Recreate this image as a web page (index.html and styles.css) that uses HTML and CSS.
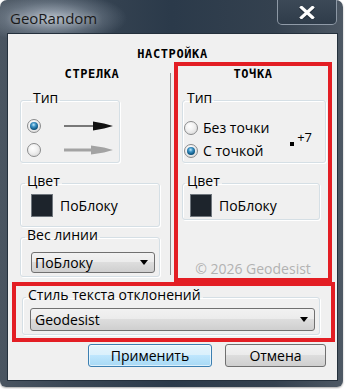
FILE: index.html
```html
<!DOCTYPE html>
<html lang="ru">
<head>
<meta charset="utf-8">
<title>GeoRandom</title>
<link rel="stylesheet" href="styles.css">
</head>
<body>
<div class="window">
  <div class="titlebar">
    <span class="title">GeoRandom</span>
    <div class="close">
      <svg width="16" height="13" viewBox="0 0 16 13">
        <path d="M2.5 1.5 L13.5 11.5 M13.5 1.5 L2.5 11.5" stroke="#1b2530" stroke-width="4" stroke-linecap="square" transform="translate(0 1)" opacity="0.6"/>
        <path d="M2.5 1.5 L13.5 11.5 M13.5 1.5 L2.5 11.5" stroke="#ffffff" stroke-width="3.2" stroke-linecap="square"/>
      </svg>
    </div>
  </div>
  <div class="client">
    <div class="heading">НАСТРОЙКА</div>
    <div class="columns">
      <div class="col col-left">
        <div class="subhead">СТРЕЛКА</div>
        <fieldset class="group g-ltype">
          <legend>Тип</legend>
          <div class="arrow-row">
            <span class="radio checked"></span>
            <svg class="arrow" width="50" height="12" viewBox="0 0 50 12">
              <rect x="0" y="5.5" width="31" height="1" fill="#000"/>
              <polygon points="29,1.5 40,3.5 49,6 40,8.5 29,10.5" fill="#111"/>
            </svg>
          </div>
          <div class="arrow-row">
            <span class="radio"></span>
            <svg class="arrow" width="50" height="12" viewBox="0 0 50 12">
              <rect x="0" y="4.5" width="30" height="3" fill="#a3a3a3"/>
              <polygon points="27,1.5 40,3.5 49,6 40,8.5 27,10.5" fill="#a3a3a3"/>
            </svg>
          </div>
        </fieldset>
        <fieldset class="group g-lcolor">
          <legend>Цвет</legend>
          <div class="color-row">
            <span class="swatch"></span>
            <span>ПоБлоку</span>
          </div>
        </fieldset>
        <fieldset class="group g-weight">
          <legend>Вес линии</legend>
          <div class="gbody-weight">
            <div class="combo combo-small"><span>ПоБлоку</span><span class="caret"></span></div>
          </div>
        </fieldset>
      </div>
      <div class="col col-right">
        <div class="subhead">ТОЧКА</div>
        <fieldset class="group g-rtype">
          <legend>Тип</legend>
          <div class="rtype-body">
            <div class="radios">
              <div class="radio-row"><span class="radio"></span><span class="rlabel">Без точки</span></div>
              <div class="radio-row"><span class="radio checked"></span><span class="rlabel">С точкой</span></div>
            </div>
            <div class="marker"><span class="dot"></span><span class="plus">+7</span></div>
          </div>
        </fieldset>
        <fieldset class="group g-rcolor">
          <legend>Цвет</legend>
          <div class="color-row">
            <span class="swatch"></span>
            <span>ПоБлоку</span>
          </div>
        </fieldset>
        <div class="copyright">© 2026 Geodesist</div>
      </div>
    </div>
    <div class="style-box">
      <fieldset class="group g-style">
        <legend>Стиль текста отклонений</legend>
        <div class="gbody-style">
          <div class="combo combo-wide"><span>Geodesist</span><span class="caret"></span></div>
        </div>
      </fieldset>
    </div>
    <div class="buttons">
      <div class="btn btn-default">Применить</div>
      <div class="btn">Отмена</div>
    </div>
  </div>
</div>
</body>
</html>
```
FILE: styles.css
```css
* { box-sizing: border-box; }
html, body { margin: 0; padding: 0; }
body {
  width: 345px;
  height: 389px;
  overflow: hidden;
  background: #ffffff;
  font-family: "Open Sans", "Noto Sans", sans-serif;
  font-size: 14px;
  color: #000;
}
.window {
  width: 343px;
  height: 387px;
  border-radius: 7px 7px 6px 6px;
  padding: 0 5px 6px 7px;
  display: flex;
  flex-direction: column;
  background:
    radial-gradient(ellipse 75px 26px at 52px 18px, rgba(190, 200, 212, 0.85), rgba(160, 172, 186, 0.35) 60%, rgba(120, 135, 150, 0) 100%),
    linear-gradient(90deg, #4a5561 0%, #3a4755 20%, #2b3a4a 50%, #34414f 80%, #4d5864 100%);
  box-shadow: 0 1px 2px rgba(0, 0, 0, 0.35);
}
.titlebar {
  height: 33px;
  display: flex;
  align-items: flex-start;
}
.title {
  font-size: 15px;
  line-height: 20px;
  padding: 8px 0 0 3px;
  color: #1a1a1a;
  text-shadow: 0 0 6px rgba(255, 255, 255, 0.5);
}
.close {
  margin-left: auto;
  margin-right: 1px;
  width: 60px;
  height: 25px;
  border: 1px solid rgba(200, 210, 222, 0.6);
  border-top: none;
  border-radius: 0 0 5px 5px;
  background: linear-gradient(#3c4957, #2f3c4a);
  display: flex;
  align-items: center;
  justify-content: center;
}
.client {
  flex: 1;
  background: #f0f0f0;
  border: 1px solid #24303c;
  display: flex;
  flex-direction: column;
}
.heading {
  height: 28px;
  padding-top: 12px;
  line-height: 16px;
  text-align: center;
  font-family: "DejaVu Sans Mono", monospace;
  font-weight: bold;
  font-size: 12px;
  letter-spacing: 0.6px;
}
.columns {
  display: grid;
  grid-template-columns: 160px 158px;
  column-gap: 2px;
  margin: 0 5px 0 4px;
  height: 220px;
}
.col { display: flex; flex-direction: column; }
.col-left {
  padding-top: 4px;
  background: linear-gradient(#8c8c8c, #8c8c8c) no-repeat right 1px top 11px / 1px 202px;
}
.col-right {
  border: 4px solid #e31e24;
}
.subhead {
  line-height: 16px;
  height: 16px;
  text-align: center;
  font-family: "DejaVu Sans Mono", monospace;
  font-weight: bold;
  font-size: 12px;
  letter-spacing: 0.6px;
}
.group {
  margin: 0;
  padding: 0;
  min-width: 0;
  border: 1px solid #d5dfe5;
  border-radius: 3px;
  box-shadow: inset 1px 1px 0 #fff, 1px 1px 0 #fff;
}
.group legend {
  padding: 0 2px 4px;
  margin-left: 4px;
  line-height: 16px;
}
.g-ltype { margin: 8px 0 0 8px; width: 100px; padding: 4px 0 0 6px; }
.arrow-row { height: 24px; display: flex; align-items: center; }
.arrow { margin-left: 23px; display: block; }
.radio {
  width: 14px;
  height: 14px;
  border-radius: 50%;
  border: 1px solid #8a8b8c;
  background: radial-gradient(circle at 40% 35%, #ffffff 0%, #f2f2f2 40%, #d2d2d2 100%);
  display: flex;
  align-items: center;
  justify-content: center;
  flex: none;
}
.radio.checked::after {
  content: "";
  width: 8px;
  height: 8px;
  border-radius: 50%;
  background: radial-gradient(circle at 45% 35%, #c4ebfb 0%, #3f94c6 30%, #105a86 65%, #0a3552 100%);
}
.g-lcolor { margin: 10px 0 0 8px; width: 140px; }
.color-row { display: flex; align-items: center; gap: 7px; padding: 1px 0 0 10px; line-height: 16px; }
.g-lcolor .color-row { padding-bottom: 9px; }
.swatch {
  width: 22px;
  height: 23px;
  background: #1d242c;
  border: 1px solid #6f767d;
  flex: none;
}
.g-weight { margin: 0 0 0 8px; width: 140px; }
.gbody-weight { padding: 5px 0 3px 10px; }
.combo {
  height: 21px;
  border: 1px solid #707070;
  border-radius: 3px;
  background: linear-gradient(#f2f2f2 0%, #ebebeb 50%, #dddddd 50%, #cfcfcf 100%);
  display: flex;
  align-items: center;
  justify-content: space-between;
  padding: 0 6px 0 3px;
  line-height: 16px;
}
.combo-small { width: 124px; }
.caret {
  width: 0;
  height: 0;
  border-left: 4.5px solid transparent;
  border-right: 4.5px solid transparent;
  border-top: 5px solid #000;
}
.g-rtype { margin: 8px 2px 0 4px; }
.g-rtype legend { margin-left: 2px; }
.rtype-body { display: flex; padding: 6px 0 0 1px; }
.radio-row { height: 23px; display: flex; align-items: center; }
.rlabel { margin-left: 5px; line-height: 16px; }
.marker { margin: 14px 13px 0 auto; display: flex; align-items: flex-start; }
.dot { width: 4px; height: 4px; background: #000; margin-top: 12px; }
.plus { font-size: 13px; line-height: 14px; margin-left: 3px; }
.g-rcolor { margin: 10px 8px 0 4px; }
.g-rcolor legend { margin-left: 2px; }
.g-rcolor .color-row { padding: 1px 0 2px 7px; }
.copyright {
  margin-top: auto;
  padding-bottom: 1px;
  line-height: 16px;
  text-align: center;
  color: #b2b2b2;
}
.style-box {
  margin: 0 2px 0 4px;
  height: 60px;
  border: 4px solid #e31e24;
}
.g-style { margin: 1px 11px 0 6px; }
.g-style legend { margin-left: 3px; }
.gbody-style { padding: 1px 0 3px 7px; }
.combo-wide { width: 285px; height: 23px; padding-left: 4px; }
.buttons {
  display: flex;
  justify-content: flex-end;
  gap: 13px;
  margin-top: 2px;
  padding-right: 11px;
}
.btn {
  height: 23px;
  width: 101px;
  border: 1px solid #707070;
  border-radius: 3px;
  background: linear-gradient(#f2f2f2 0%, #ebebeb 50%, #dddddd 50%, #cfcfcf 100%);
  display: flex;
  align-items: center;
  justify-content: center;
  line-height: 16px;
}
.btn-default {
  width: 124px;
  border-color: #3c7fb1;
  background: linear-gradient(#e5f4fc 0%, #d9f0fc 50%, #bee6fd 50%, #a7d9f5 100%);
  box-shadow: inset 0 0 0 1px rgba(255, 255, 255, 0.6);
}
```
